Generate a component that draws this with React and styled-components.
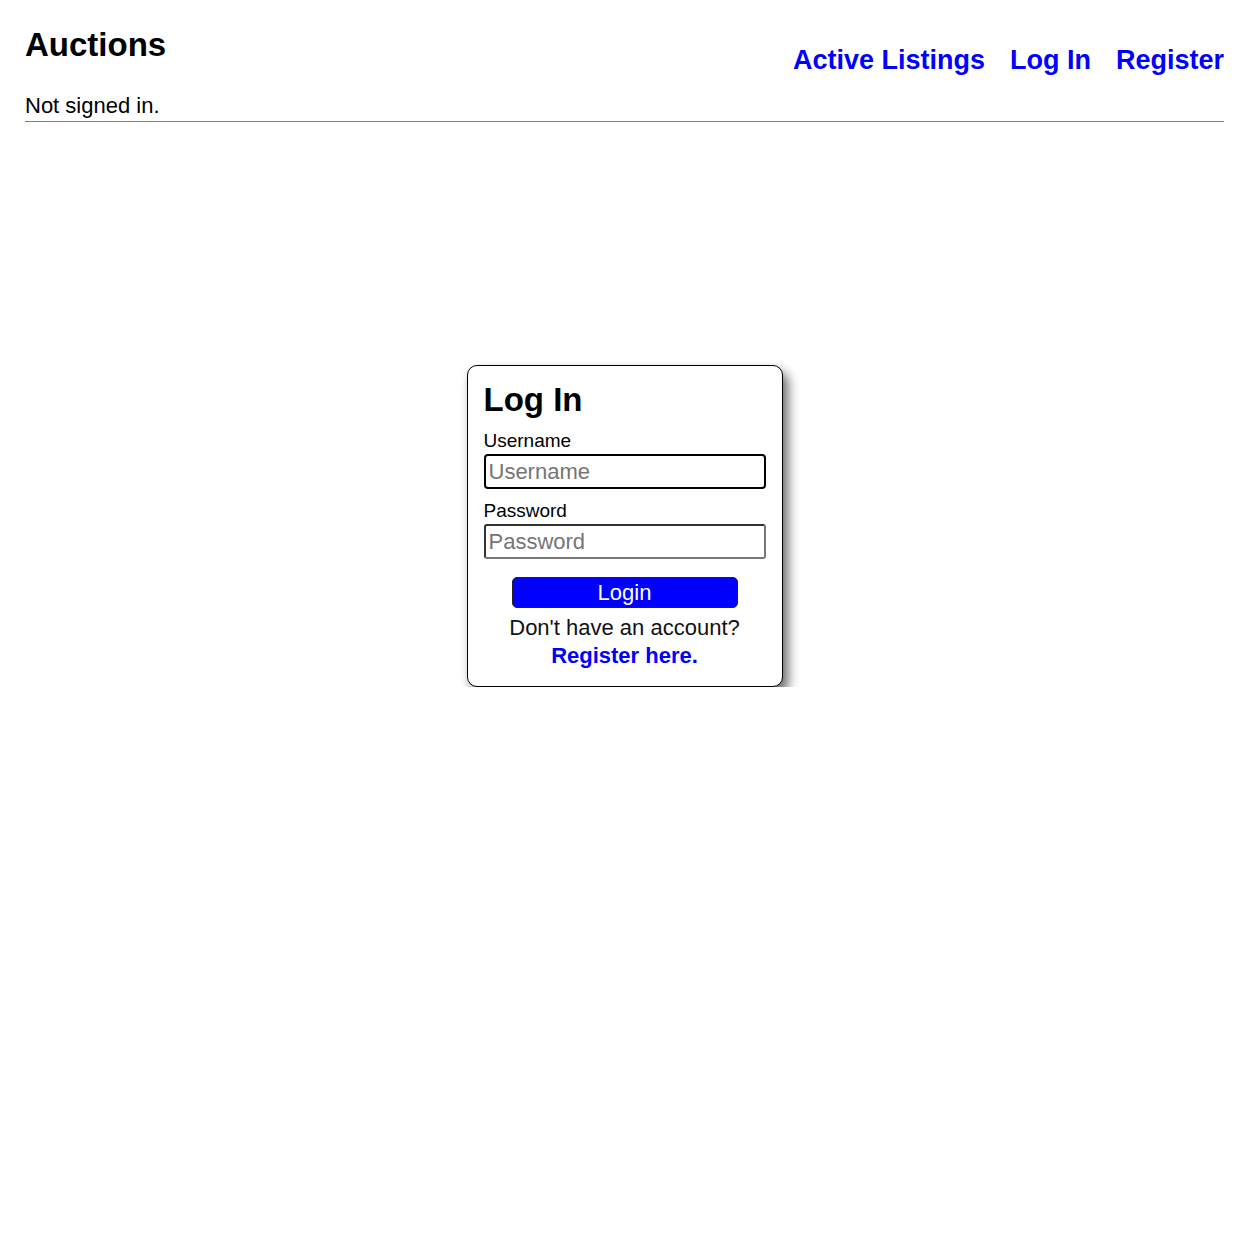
import React from "react";
import styled, { createGlobalStyle } from "styled-components";

const GlobalStyle = createGlobalStyle`
  body {
    margin: 0;
    background: #ffffff;
    font-family: "Liberation Sans", Arial, sans-serif;
    color: #000000;
  }
`;

const Page = styled.div`
  padding: 0 25px;
`;

const Header = styled.header`
  display: flex;
  justify-content: space-between;
  align-items: flex-start;
`;

const Title = styled.h1`
  margin: 26px 0 0 0;
  font-size: 33px;
  font-weight: bold;
`;

const Nav = styled.nav`
  display: flex;
  gap: 25px;
  margin-top: 45px;
`;

const NavLink = styled.a`
  font-size: 27px;
  font-weight: bold;
  color: #0000ff;
  text-decoration: none;
`;

const Status = styled.div`
  margin-top: 17px;
  font-size: 22px;
  padding-bottom: 2px;
  border-bottom: 1px solid #808080;
`;

const Main = styled.main`
  display: flex;
  justify-content: center;
  padding-top: 243px;
`;

const Card = styled.div`
  width: 316px;
  box-sizing: border-box;
  padding: 15px 16px 16px;
  border: 1px solid #000000;
  border-radius: 10px;
  background: #ffffff;
  box-shadow: 5px 7px 12px rgba(0, 0, 0, 0.6);
`;

const CardTitle = styled.h1`
  margin: 0 0 11px 0;
  font-size: 33px;
  font-weight: bold;
`;

const Label = styled.label`
  display: block;
  font-size: 19px;
  margin-bottom: 2px;
`;

const Input = styled.input`
  display: block;
  box-sizing: border-box;
  width: 100%;
  height: 35px;
  margin: 0 0 11px 0;
  padding: 0 3px;
  font-family: "Liberation Sans", Arial, sans-serif;
  font-size: 22px;
  border-width: 2px;
  border-style: solid;
  border-radius: ${(p) => (p.focused ? "4px" : "3px")};
  border-color: ${(p) => (p.focused ? "#000000" : "#333333 #777777 #777777 #333333")};
  outline: none;

  &::placeholder {
    color: #757575;
  }
`;

const ButtonRow = styled.div`
  display: flex;
  justify-content: center;
  margin-top: 18px;
`;

const Button = styled.button`
  width: 226px;
  height: 31px;
  padding: 0;
  background: #0000ff;
  color: #ffffff;
  font-family: "Liberation Sans", Arial, sans-serif;
  font-size: 22px;
  border: 1px solid #222222;
  border-radius: 5px;
  cursor: pointer;
`;

const Footer = styled.p`
  margin: 6px 0 0 0;
  text-align: center;
  font-size: 22px;
  line-height: 28px;
  color: #111111;

  a {
    color: #0000ff;
    font-weight: bold;
    text-decoration: none;
  }
`;

function App() {
  return (
    <Page>
      <GlobalStyle />
      <Header>
        <Title>Auctions</Title>
        <Nav>
          <NavLink href="#">Active Listings</NavLink>
          <NavLink href="#">Log In</NavLink>
          <NavLink href="#">Register</NavLink>
        </Nav>
      </Header>
      <Status>Not signed in.</Status>
      <Main>
        <Card>
          <CardTitle>Log In</CardTitle>
          <Label htmlFor="username">Username</Label>
          <Input id="username" placeholder="Username" focused />
          <Label htmlFor="password">Password</Label>
          <Input id="password" type="password" placeholder="Password" />
          <ButtonRow>
            <Button type="button">Login</Button>
          </ButtonRow>
          <Footer>
            Don't have an account?
            <br />
            <a href="#">Register here.</a>
          </Footer>
        </Card>
      </Main>
    </Page>
  );
}

export default App;
